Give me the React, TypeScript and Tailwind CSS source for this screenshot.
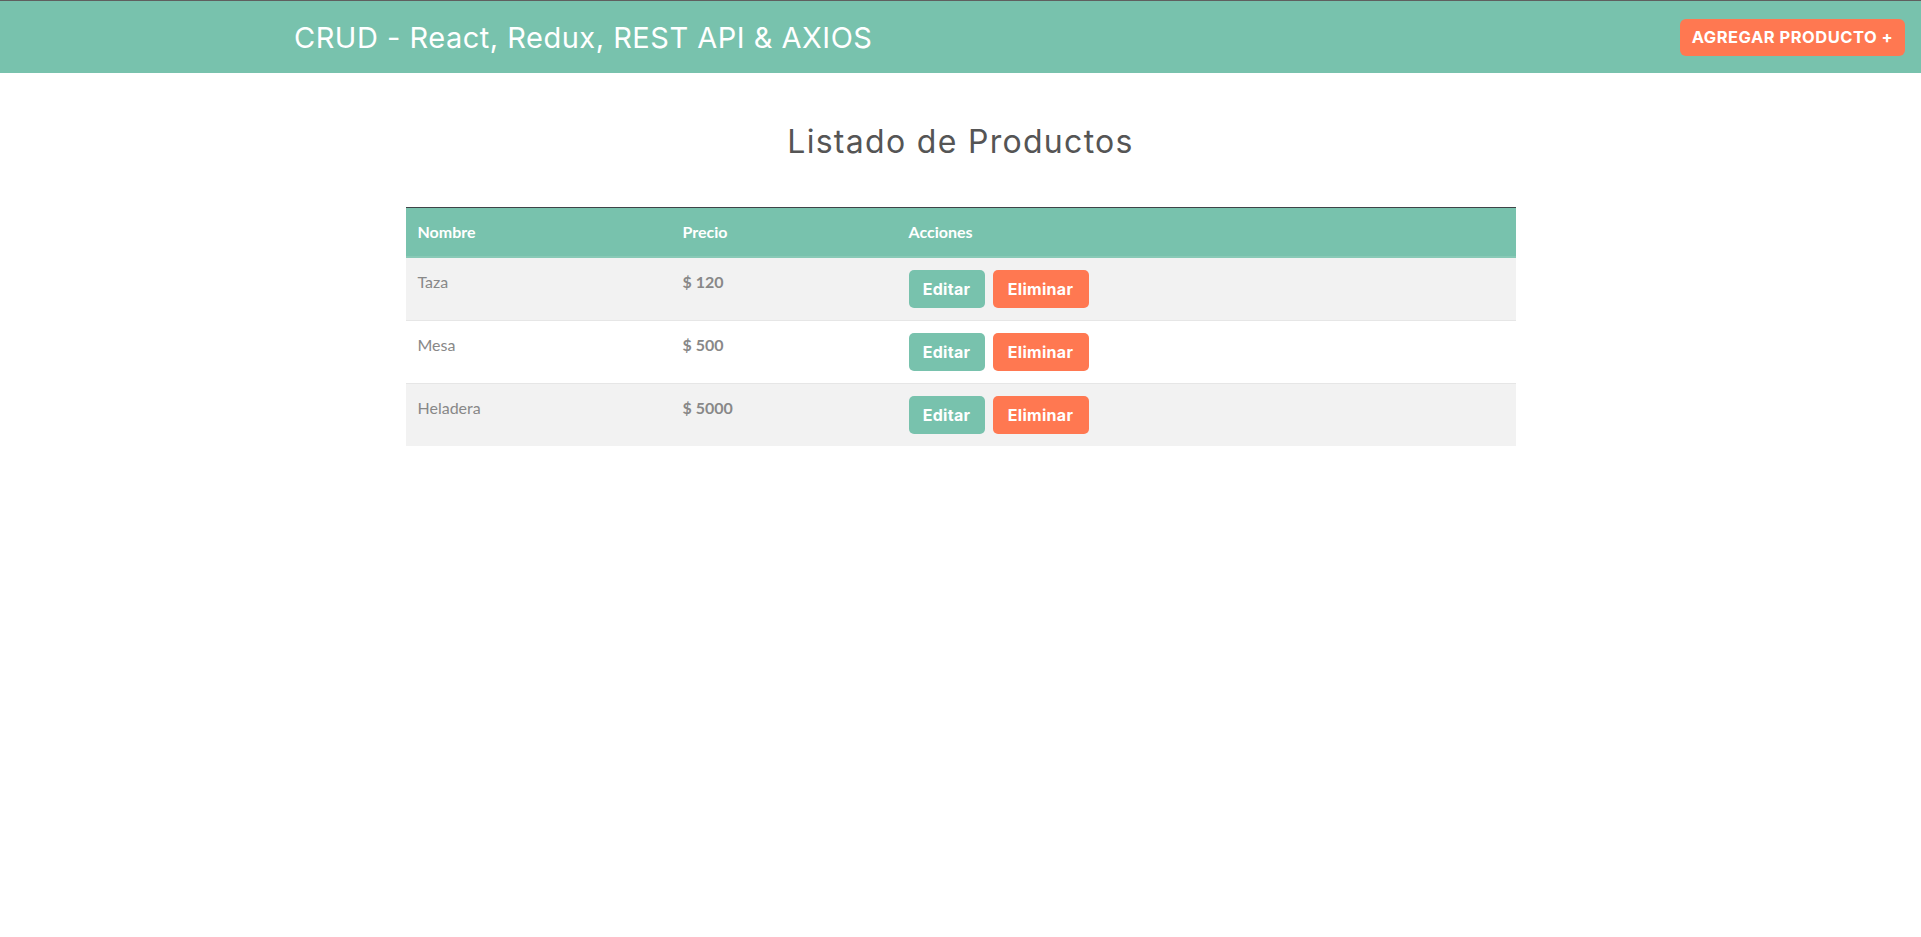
import React from "react";

const mont = { fontFamily: "Inter, 'Noto Sans', sans-serif" };

const rows = [
  { name: "Taza", price: "$ 120", striped: true },
  { name: "Mesa", price: "$ 500", striped: false },
  { name: "Heladera", price: "$ 5000", striped: true },
];

export default function App() {
  return (
    <div className="min-h-[937px] bg-white" style={{ fontFamily: "Lato, 'Open Sans', sans-serif" }}>
      <header className="h-[73px] border-t border-[#5f5f5f] bg-[#78c2ad] flex items-center justify-between">
        <h1
          className="ml-[294px] text-[29px] font-normal text-white tracking-[0.5px] leading-none"
          style={mont}
        >
          CRUD - React, Redux, REST API &amp; AXIOS
        </h1>
        <button
          className="mr-4 w-[225px] h-[37px] rounded-[6px] bg-[#ff7851] text-white text-[16.5px] font-bold tracking-[0.5px] flex items-center justify-center"
          style={mont}
        >
          AGREGAR PRODUCTO +
        </button>
      </header>

      <main className="w-[1110px] mx-auto">
        <h2
          className="text-center text-[32px] font-normal text-[#555555] mt-[45px] mb-[41px] leading-[48px] tracking-[1.3px]"
          style={mont}
        >
          Listado de Productos
        </h2>

        <table className="w-[1110px] table-fixed border-collapse text-[16px]">
          <thead>
            <tr className="bg-[#78c2ad] border-t border-[#3f4447] text-white">
              <th className="w-[265px] text-left font-bold px-3 py-3 leading-6 border-b-2 border-[#88c9b6]">Nombre</th>
              <th className="w-[226px] text-left font-bold px-3 py-3 leading-6 border-b-2 border-[#88c9b6]">Precio</th>
              <th className="text-left font-bold px-3 py-3 leading-6 border-b-2 border-[#88c9b6]">Acciones</th>
            </tr>
          </thead>
          <tbody>
            {rows.map((r, i) => (
              <tr key={r.name} className={r.striped ? "bg-[#f2f2f2]" : "bg-white"}>
                <td className={`align-top px-3 pt-3 pb-[11px] leading-6 text-[#888888] ${i > 0 ? "border-t border-[#e6e6e6]" : ""}`}>{r.name}</td>
                <td className={`align-top px-3 pt-3 pb-[11px] leading-6 text-[#888888] font-bold ${i > 0 ? "border-t border-[#e6e6e6]" : ""}`}>{r.price}</td>
                <td className={`align-top px-3 pt-3 pb-3 ${i > 0 ? "border-t border-[#e6e6e6]" : ""}`}>
                  <div className="flex gap-2" style={mont}>
                    <button className="w-[76px] h-[38px] rounded-[5px] bg-[#78c2ad] text-white font-bold text-[16px] tracking-[0.3px] flex items-center justify-center">
                      Editar
                    </button>
                    <button className="w-[96px] h-[38px] rounded-[5px] bg-[#ff7851] text-white font-bold text-[16px] tracking-[0.3px] flex items-center justify-center">
                      Eliminar
                    </button>
                  </div>
                </td>
              </tr>
            ))}
          </tbody>
        </table>
      </main>
    </div>
  );
}
